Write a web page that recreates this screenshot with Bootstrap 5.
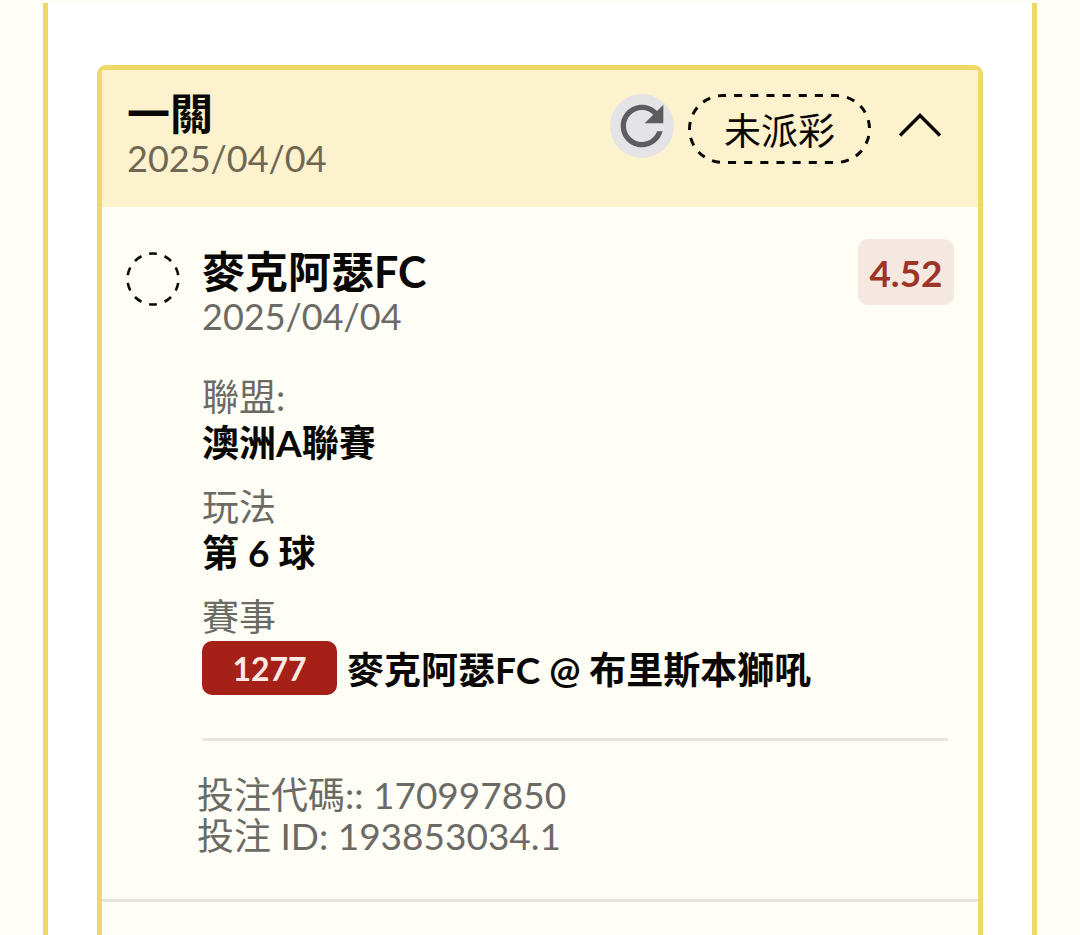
<!DOCTYPE html>
<html lang="zh-Hant">
<head>
<meta charset="utf-8">
<meta name="viewport" content="width=device-width, initial-scale=1">
<title>投注紀錄</title>
<link href="https://cdn.jsdelivr.net/npm/bootstrap@5.3.0/dist/css/bootstrap.min.css" rel="stylesheet">
<style>
  :root { --gold: #edd868; --cream: #fffef6; --muted: #6b6a65; }
  body { background: var(--cream); color: #0a0806; font-family: Lato, "Noto Sans CJK TC", sans-serif; font-size: 37px; line-height: 46px; }
  .page { padding: 3px 43px 0; }
  .frame { background: #fff; border: solid var(--gold); border-width: 0 5px; padding: 62px 49px 0; }
  .slip { --bs-card-bg: var(--cream); --bs-card-color: #0a0806; border: 5px solid var(--gold); border-bottom: 0; border-radius: 9px 9px 0 0; }
  .slip-head { background: #fdf2ce; padding: 21px 34px 25px 25px; min-height: 137px; }
  .slip-title { font-size: 43px; line-height: 45px; font-weight: 700; }
  .date { color: var(--muted); font-size: 36px; line-height: 44px; }
  .slip-head .date { color: #6f6751; }
  .tools { gap: 14px; margin-top: 3px; }
  .refresh { width: 64px; height: 64px; background: #e4e4e7; fill: #5d5d60; }
  .status { width: 183px; height: 70px; padding-top: 4px; }
  .status svg { inset: 0; }
  .toggler { margin: 13px 0 0 11px; }
  .leg { padding: 42px 24px 43px 24px; border-bottom: 3px solid #e7e6e0; }
  .leg-mark { margin-top: 3px; width: 54px; height: 54px; }
  .leg-top { gap: 22px; }
  .odds { background: #f5e8e1; color: #9c3527; font-weight: 700; border-radius: 10px; width: 96px; height: 66px; margin-top: -10px; padding-top: 2px; }
  .indent { margin-left: 76px; }
  .pairs { margin-top: 37px; }
  .pairs dt { color: var(--muted); font-weight: 400; line-height: 44px; }
  .pairs dd { margin: 0 0 18px; font-weight: 700; line-height: 48px; }
  .pairs .match { gap: 10px; margin: 2px 0 43px; }
  .match-name { padding-top: 4px; }
  .number { background: #a52017; color: #fbe9e4; font-size: 32px; font-weight: 700; border-radius: 10px; width: 135px; height: 54px; padding-top: 2px; }
  .rule { margin: 0 6px 0 76px; border-top: 3px solid #e7e6e0; opacity: 1; }
  .codes { color: var(--muted); line-height: 41px; margin: 33px 0 0 71px; }
</style>
</head>
<body>
<main class="page min-vh-100 d-flex">
  <div class="frame flex-grow-1 d-flex flex-column">
    <article class="card slip flex-grow-1">
      <header class="slip-head d-flex justify-content-between align-items-start">
        <div>
          <h1 class="slip-title m-0">一關</h1>
          <div class="date">2025/04/04</div>
        </div>
        <div class="tools d-flex align-items-start">
          <button class="refresh btn p-0 border-0 rounded-circle d-flex" type="button" aria-label="重新整理">
            <svg width="64" height="64" viewBox="0 0 24 24"><path d="M17.65 6.35C16.2 4.9 14.21 4 12 4c-4.42 0-7.99 3.58-7.99 8s3.57 8 7.99 8c3.73 0 6.84-2.55 7.73-6h-2.08c-.82 2.33-3.04 4-5.65 4-3.31 0-6-2.69-6-6s2.69-6 6-6c1.66 0 3.14.69 4.22 1.78L13 11h7V4l-2.35 2.35z"/></svg>
          </button>
          <div class="status position-relative d-flex align-items-center justify-content-center">
            <svg class="position-absolute" width="183" height="70" fill="none" stroke="#0a0806" stroke-width="3" aria-hidden="true"><rect x="1.5" y="1.5" width="180" height="67" rx="33.5" pathLength="432" stroke-dasharray="8 8" stroke-dashoffset="5"/></svg>
            <span>未派彩</span>
          </div>
          <button class="toggler btn p-0 border-0 d-flex" type="button" aria-label="收合">
            <svg width="48" height="36" viewBox="0 0 48 36" fill="none" stroke="#0a0806" stroke-width="3.4"><path d="M4 28.5 24 8.500 44 28.5"/></svg>
          </button>
        </div>
      </header>
      <section class="leg">
        <div class="leg-top d-flex align-items-start">
          <svg class="leg-mark flex-shrink-0" viewBox="0 0 54 54" fill="none" stroke="#0a0806" stroke-width="2.6" aria-hidden="true"><circle cx="27" cy="27" r="25.5" pathLength="160" stroke-dasharray="8 8" stroke-dashoffset="-4"/></svg>
          <div class="flex-grow-1">
            <h2 class="slip-title m-0">麥克阿瑟FC</h2>
            <div class="date">2025/04/04</div>
          </div>
          <div class="odds d-flex align-items-center justify-content-center">4.52</div>
        </div>
        <dl class="pairs indent mb-0">
          <dt>聯盟:</dt><dd>澳洲A聯賽</dd>
          <dt>玩法</dt><dd>第 6 球</dd>
          <dt>賽事</dt>
          <dd class="match d-flex align-items-center">
            <span class="number d-flex align-items-center justify-content-center">1277</span>
            <span class="match-name">麥克阿瑟FC @ 布里斯本獅吼</span>
          </dd>
        </dl>
        <hr class="rule">
        <div class="codes">
          <div>投注代碼:: 170997850</div>
          <div>投注 ID: 193853034.1</div>
        </div>
      </section>
    </article>
  </div>
</main>
<script src="https://cdn.jsdelivr.net/npm/bootstrap@5.3.0/dist/js/bootstrap.bundle.min.js"></script>
</body>
</html>
